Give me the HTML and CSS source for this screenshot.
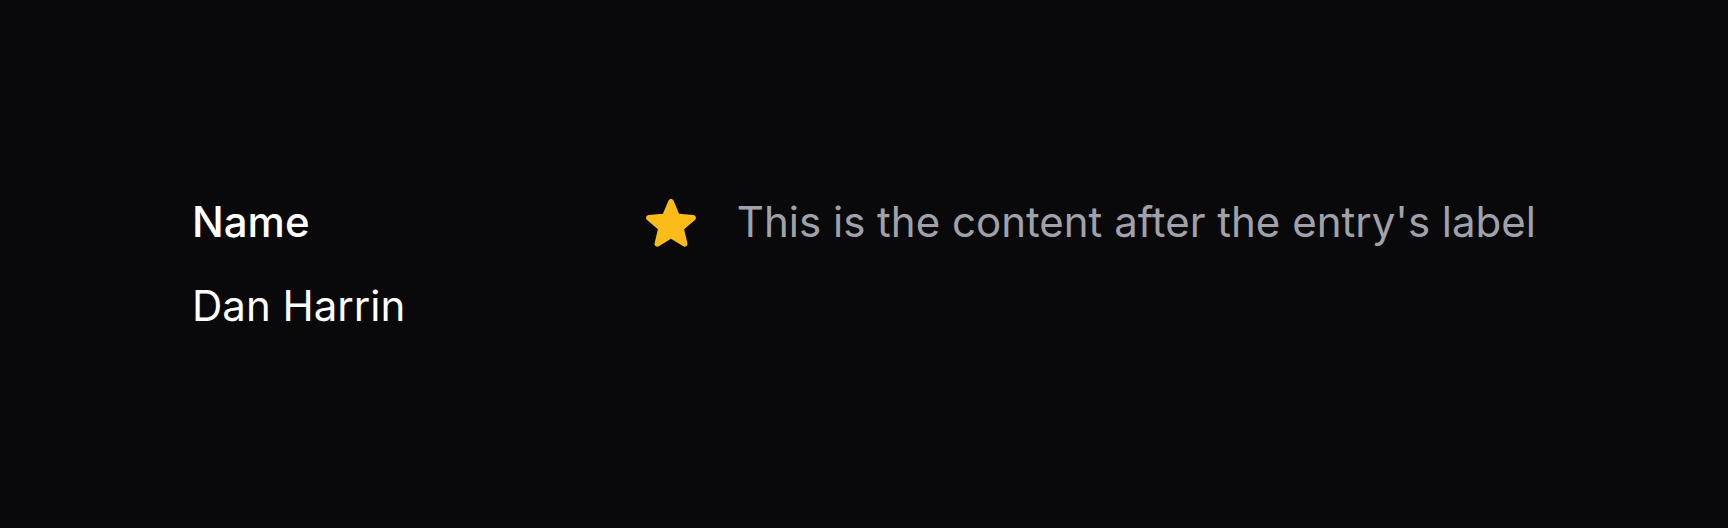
FILE: index.html
```html
<!DOCTYPE html>
<html>

<head>
    <meta charset="utf-8">
    <title>Entry</title>
    <link rel="stylesheet" href="styles.css">
</head>

<body>
    <div id="entry">
        <div class="entry-label-row">
            <div class="entry-label">Name</div>
            <div class="entry-hint">
                <svg class="hint-icon" viewBox="0 0 20 20" fill="currentColor" aria-hidden="true">
                    <path fill-rule="evenodd" d="M10.868 2.884c-.321-.772-1.415-.772-1.736 0l-1.83 4.401-4.753.381c-.833.067-1.171 1.107-.536 1.651l3.62 3.102-1.106 4.637c-.194.813.691 1.456 1.405 1.02L10 15.591l4.069 2.485c.713.436 1.598-.207 1.404-1.02l-1.106-4.637 3.62-3.102c.635-.544.297-1.584-.536-1.65l-4.752-.382-1.831-4.401Z" clip-rule="evenodd"/>
                </svg>
                <span class="hint-text">This is the content after the entry's label</span>
            </div>
        </div>
        <div class="entry-content">Dan Harrin</div>
    </div>
</body>
</html>
```

FILE: styles.css
```css
html,
body {
    margin: 0;
    height: 100%;
    background: #09090b;
}

#entry {
    font-family: Inter, "Noto Sans", sans-serif;
    font-size: 42px;
    line-height: 60px;
    padding: 192px;
    display: flex;
    flex-direction: column;
    gap: 24px;
}

.entry-label-row {
    display: flex;
    justify-content: space-between;
    align-items: center;
}

.entry-label {
    color: #fff;
    font-weight: 500;
}

.entry-hint {
    display: flex;
    align-items: center;
    gap: 36px;
}

.hint-icon {
    width: 60px;
    height: 60px;
    color: #fbbb18;
}

.hint-text {
    color: #a1a1aa;
}

.entry-content {
    color: #fff;
}
```
